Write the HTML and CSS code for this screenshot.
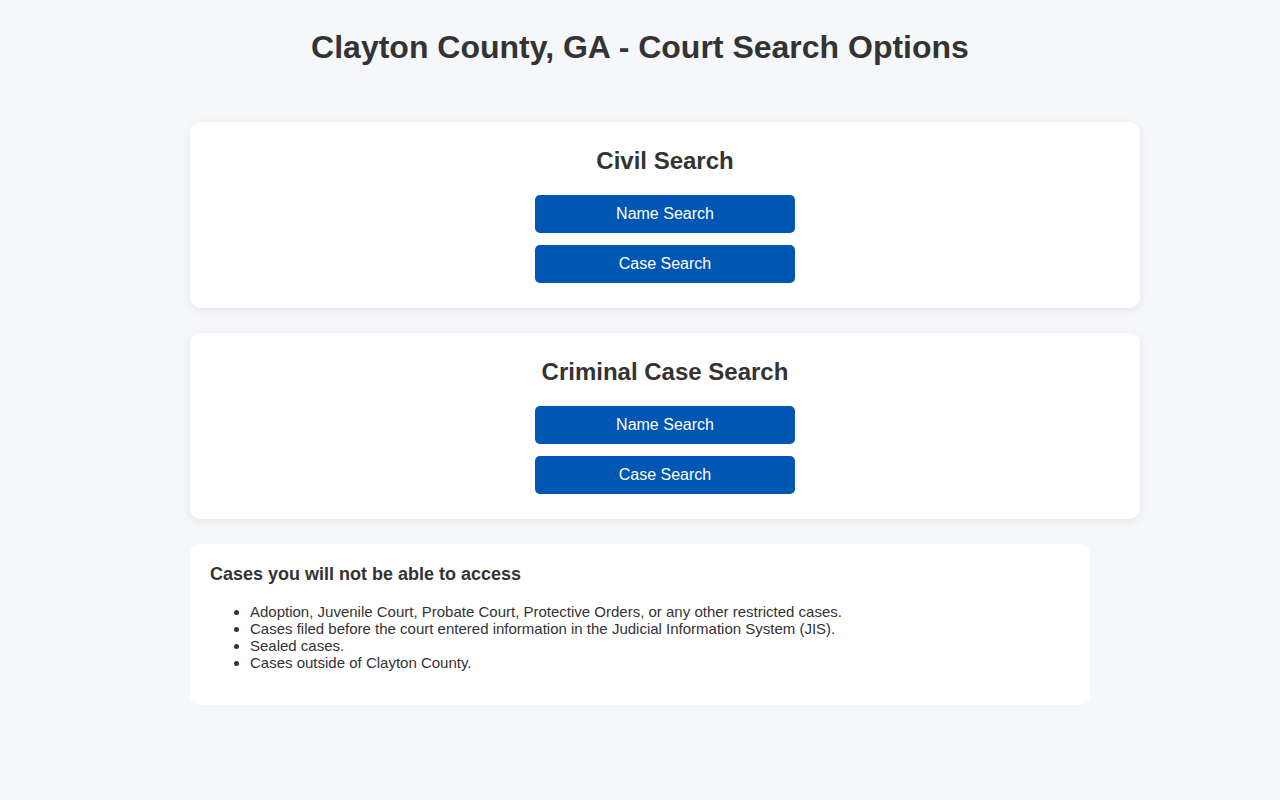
FILE: index.html
```html
<!DOCTYPE html>
<html lang="en">
<head>
    <meta charset="UTF-8">
    <title>Clayton County, GA - Court Search Options</title>

    <link rel="stylesheet" href="styles.css">
</head>
<body>

<h1>Clayton County, GA - Court Search Options</h1>

<div class="wrap">
    <div class="card">
        <h2>Civil Search</h2>
        <div class="btns">
            <a class="btn" href="#">Name Search</a>
            <a class="btn" href="#">Case Search</a>
        </div>
    </div>

    <div class="card">
        <h2>Criminal Case Search</h2>
        <div class="btns">
            <a class="btn" href="#">Name Search</a>
            <a class="btn" href="#">Case Search</a>
        </div>
    </div>

    <div class="note">
        <h3>Cases you will not be able to access</h3>
        <ul>
            <li>Adoption, Juvenile Court, Probate Court, Protective Orders, or any other restricted cases.</li>
            <li>Cases filed before the court entered information in the Judicial Information System (JIS).</li>
            <li>Sealed cases.</li>
            <li>Cases outside of Clayton County.</li>
        </ul>
    </div>
</div>

</body>
</html>
```

FILE: styles.css
```css
body {
    margin: 0;
    padding: 8px;
    background: #f5f7fa;
    color: #333;
    font-family: "Liberation Sans", Arial, sans-serif;
}

h1 {
    margin: 21px 0 56px;
    font-size: 32px;
    line-height: 37px;
    text-align: center;
}

.wrap {
    width: 900px;
    margin: 0 auto;
}

.card {
    width: 100%;
    padding: 25px;
    margin-bottom: 25px;
    background: #fff;
    border-radius: 10px;
    box-shadow: 0 2px 8px rgba(0, 0, 0, 0.08);
    text-align: center;
}

.card h2 {
    margin: 0 0 20px;
    font-size: 24px;
    line-height: 28px;
}

.btns {
    display: flex;
    flex-direction: column;
    align-items: center;
    gap: 12px;
}

.btn {
    display: block;
    width: 260px;
    height: 38px;
    line-height: 38px;
    background: #0056b3;
    color: #fff;
    font-size: 16px;
    text-decoration: none;
    border-radius: 5px;
}

.note {
    padding: 20px;
    background: #fff;
    border-radius: 10px;
}

.note h3 {
    margin: 0 0 18px;
    font-size: 18px;
    line-height: 21px;
}

.note ul {
    margin: 0 0 14px;
    padding-left: 40px;
    font-size: 15px;
    line-height: 17px;
}
```
